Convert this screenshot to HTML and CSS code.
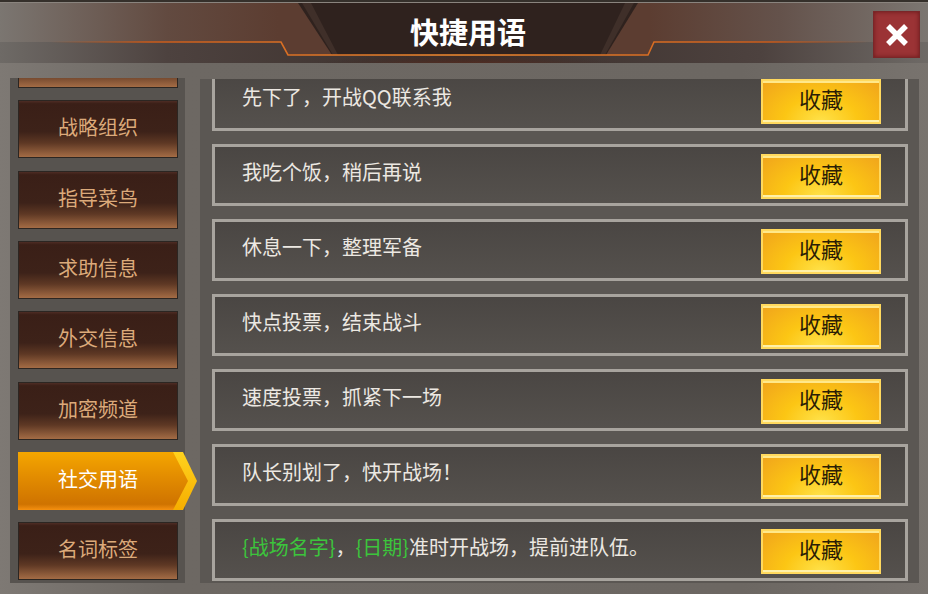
FILE: index.html
```html
<!DOCTYPE html>
<html>
	<head>
		<meta charset="UTF-8">
		<title>快捷用语</title>
		<link rel="stylesheet" href="styles.css">
	</head>
	<body>
		<div class="head">
			<svg class="head-bg" width="928" height="63" viewBox="0 0 928 63">
				<defs>
					<linearGradient id="gBand" x1="0" y1="0" x2="1" y2="0">
						<stop offset="0" stop-color="#7b7671"/>
						<stop offset="0.18" stop-color="#624a40"/>
						<stop offset="0.3" stop-color="#5c3d31"/>
						<stop offset="0.7" stop-color="#5c3d31"/>
						<stop offset="0.84" stop-color="#64524b"/>
						<stop offset="1" stop-color="#7b7671"/>
					</linearGradient>
					<linearGradient id="gLow" x1="0" y1="0" x2="1" y2="0">
						<stop offset="0" stop-color="#6e6a66"/>
						<stop offset="0.18" stop-color="#4d423f"/>
						<stop offset="0.5" stop-color="#3a2e2a"/>
						<stop offset="0.82" stop-color="#4d423f"/>
						<stop offset="1" stop-color="#6e6a66"/>
					</linearGradient>
					<linearGradient id="gLine" x1="0" y1="0" x2="1" y2="0">
						<stop offset="0" stop-color="#c85a1a" stop-opacity="0"/>
						<stop offset="0.12" stop-color="#c85a1a"/>
						<stop offset="0.5" stop-color="#f08a30"/>
						<stop offset="0.88" stop-color="#c85a1a"/>
						<stop offset="1" stop-color="#c85a1a" stop-opacity="0"/>
					</linearGradient>
					<radialGradient id="gGlow" cx="0.5" cy="1" r="0.6">
						<stop offset="0" stop-color="#b83c14" stop-opacity="0.9"/>
						<stop offset="0.5" stop-color="#7a2a14" stop-opacity="0.5"/>
						<stop offset="1" stop-color="#2f211d" stop-opacity="0"/>
					</radialGradient>
				</defs>
				<rect x="0" y="0" width="928" height="63" fill="url(#gBand)"/>
				<rect x="0" y="0" width="928" height="2" fill="#35302b"/>
				<rect x="0" y="2" width="928" height="1" fill="#8a847e"/>
				<polygon points="0,42 281,42 288,55 648,55 654,42 928,42 928,63 0,63" fill="url(#gLow)"/>
				<polygon points="298,3 638,3 606,55 332,55" fill="#2f221e"/>
				<polygon points="302,3 311,3 338,55 333,55" fill="#3f2f29"/>
				<polygon points="625,3 634,3 605,55 600,55" fill="#3f2f29"/>
				<ellipse cx="468" cy="56" rx="160" ry="24" fill="url(#gGlow)"/>
				<polyline points="50,42 281,42 288,55 648,55 654,42 870,42" fill="none" stroke="url(#gLine)" stroke-width="1.6"/>
			</svg>
			<div class="head-side"></div>
			<h1 class="title">快捷用语</h1>
			<div class="head-side head-right">
				<span class="close">
					<svg width="24" height="22" viewBox="0 0 24 22">
						<path d="M3 2 L21 20 M21 2 L3 20" stroke="#fff" stroke-width="5.5"/>
					</svg>
				</span>
			</div>
		</div>

		<div class="main">
			<div class="side">
				<ul class="tabs">
					<li class="tab"></li>
					<li class="tab">战略组织</li>
					<li class="tab">指导菜鸟</li>
					<li class="tab">求助信息</li>
					<li class="tab">外交信息</li>
					<li class="tab">加密频道</li>
					<li class="tab tab-on"><span>社交用语</span></li>
					<li class="tab">名词标签</li>
				</ul>
			</div>
			<div class="list-box">
				<ul class="list">
					<li class="row"><p class="txt">先下了，开战QQ联系我</p><button class="fav">收藏</button></li>
					<li class="row"><p class="txt">我吃个饭，稍后再说</p><button class="fav">收藏</button></li>
					<li class="row"><p class="txt">休息一下，整理军备</p><button class="fav">收藏</button></li>
					<li class="row"><p class="txt">快点投票，结束战斗</p><button class="fav">收藏</button></li>
					<li class="row"><p class="txt">速度投票，抓紧下一场</p><button class="fav">收藏</button></li>
					<li class="row"><p class="txt">队长别划了，快开战场！</p><button class="fav">收藏</button></li>
					<li class="row"><p class="txt"><em>{战场名字}</em>，<em>{日期}</em>准时开战场，提前进队伍。</p><button class="fav">收藏</button></li>
				</ul>
			</div>
		</div>
	</body>
</html>
```

FILE: styles.css
```css
*{
	margin: 0;
	padding: 0;
	list-style: none;
	box-sizing: border-box;
}
body{
	width: 928px;
	height: 594px;
	overflow: hidden;
	font-family: "Noto Sans CJK SC", "Noto Sans", sans-serif;
	background: linear-gradient(90deg, #7e7974, #6d6863 18%, #6c6762 80%, #78736e);
}
.head{
	position: relative;
	height: 63px;
	display: grid;
	grid-template-columns: 1fr auto 1fr;
	align-items: center;
}
.head-bg{
	position: absolute;
	left: 0;
	top: 0;
}
.title{
	position: relative;
	color: #fff;
	font-size: 29px;
	font-weight: bold;
	line-height: 63px;
	padding: 0 0 3px 8px;
}
.head-right{
	position: relative;
	display: flex;
	justify-content: flex-end;
	padding-right: 8px;
}
.close{
	width: 47px;
	height: 47px;
	margin-top: 3px;
	background: #9b3335;
	border: 1px solid #7a2628;
	box-shadow: inset 0 0 4px rgba(60,0,0,0.5);
	display: flex;
	align-items: center;
	justify-content: center;
}
.main{
	display: flex;
	padding: 15px 9px 0 10px;
	gap: 15px;
}
/* 上下裁掉滚动出去的标签，右边留给选中标签的箭头 */
.side{
	width: 175px;
	height: 505px;
	clip-path: inset(0 -30px 0 0);
	background: #57534f;
	padding-left: 8px;
}
.tabs{
	margin-top: -48px;
	display: flex;
	flex-direction: column;
	gap: 12.33px;
}
.tab{
	width: 160px;
	height: 58px;
	border: 1px solid #2c2622;
	background: linear-gradient(#4e2c24 0, #3a1f17 5%, #3d2219 55%, #5e3824 75%, #a46c45 100%);
	color: #dcaa7a;
	font-size: 20px;
	padding-bottom: 5px;
	display: flex;
	align-items: center;
	justify-content: center;
}
.tab-on{
	position: relative;
	width: 179px;
	border: none;
	padding-right: 19px;
	color: #fff;
	background: linear-gradient(#ffd21e, #f6ae00);
	clip-path: polygon(0 0, 165px 0, 179px 50%, 165px 100%, 0 100%);
}
.tab-on::before{
	content: "";
	position: absolute;
	left: 0;
	top: 0;
	width: 100%;
	height: 100%;
	background: linear-gradient(#f4a600 0, #e48e00 40%, #cf7300 90%, #f59010 100%);
	clip-path: polygon(0 0, 155px 0, 170px 50%, 155px 100%, 0 100%);
}
.tab-on span{
	position: relative;
}
.list-box{
	width: 719px;
	height: 504px;
	margin-top: 1px;
	overflow: hidden;
	background: #5b5753;
	padding: 0 11px 0 12px;
}
.list{
	margin-top: -10px;
	display: flex;
	flex-direction: column;
	gap: 13px;
}
.row{
	height: 62px;
	border: 3px solid #a8a49e;
	background: linear-gradient(#4a4643, #55514d);
	display: flex;
	align-items: flex-start;
	justify-content: space-between;
	padding: 0 24px 0 27px;
}
.txt{
	color: #ece8e2;
	font-size: 20px;
	line-height: 50px;
}
.txt em{
	font-style: normal;
	color: #3cc43c;
}
.fav{
	width: 120px;
	height: 45px;
	margin-top: 7px;
	padding-bottom: 7px;
	border: 2px solid #ffd95e;
	background: radial-gradient(ellipse at 50% 100%, #ffe24a 0, #fcc614 45%, #f0a41c 100%);
	box-shadow: inset 0 2px 0 #ffe88a, inset 0 -2px 0 #fff0a8;
	color: #2b1d05;
	font-family: "Noto Sans CJK SC", sans-serif;
	font-size: 22px;
}
```
